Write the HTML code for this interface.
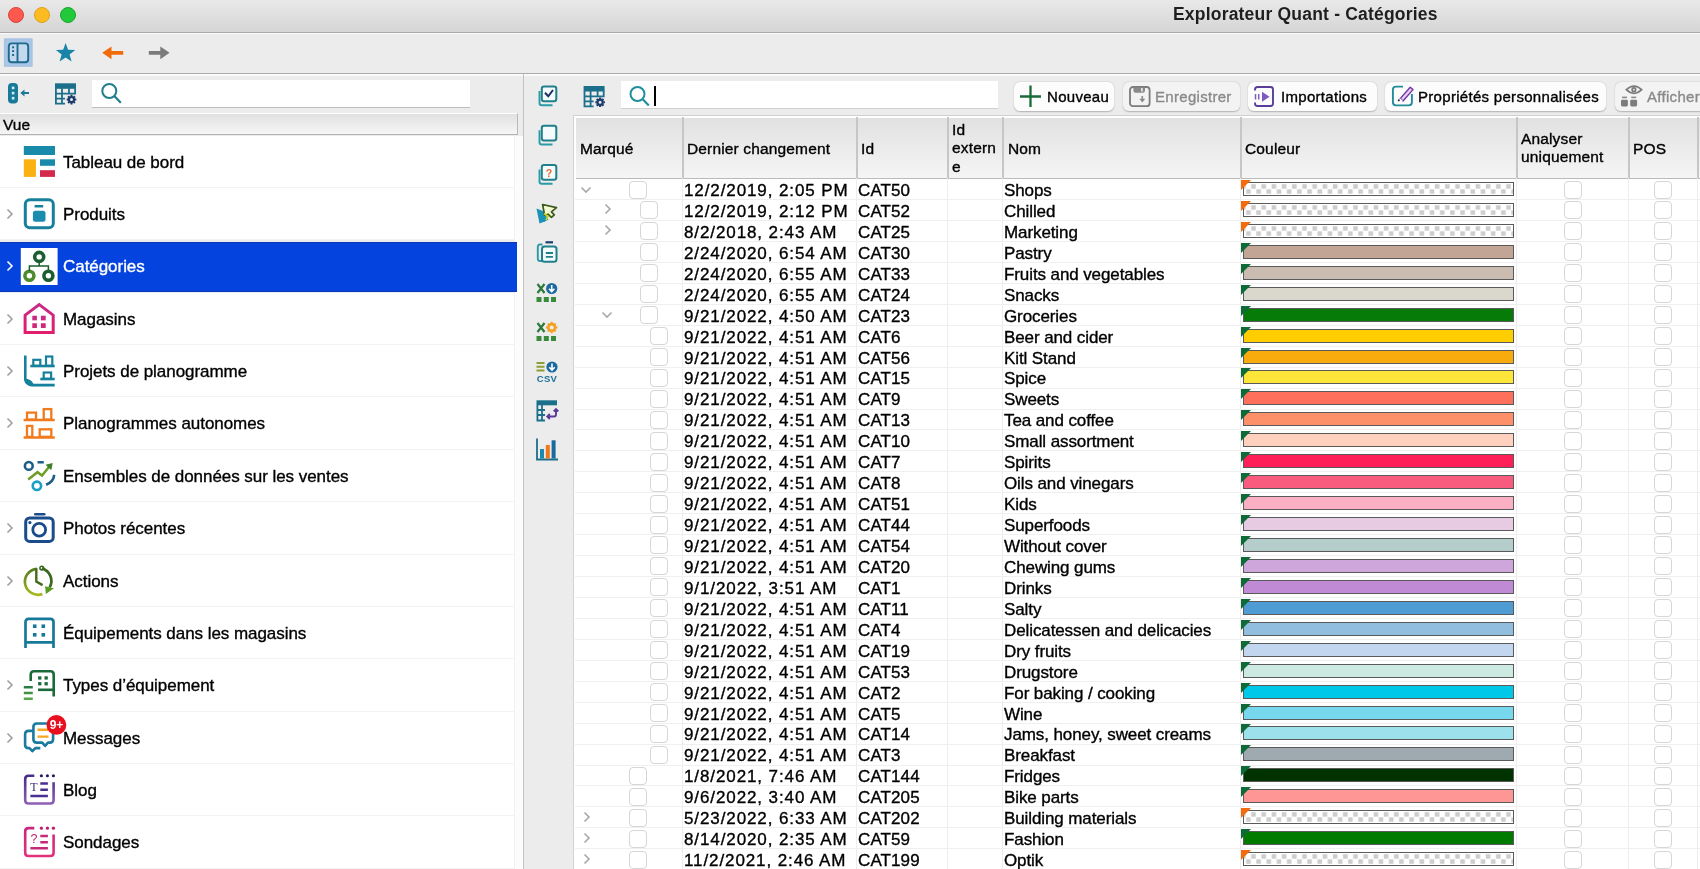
<!DOCTYPE html><html><head><meta charset="utf-8"><style>
*{margin:0;padding:0;box-sizing:border-box} svg{display:block}
html,body{width:1700px;height:869px;overflow:hidden;background:#ececec;font-family:"Liberation Sans", sans-serif;color:#000}
.a{position:absolute}
#title{left:0;top:0;width:1700px;height:33px;background:linear-gradient(#e9e9e9,#d5d5d5);border-bottom:1px solid #a9a9a9}
.tl{position:absolute;top:7px;width:16px;height:16px;border-radius:50%}
#ttl{left:1173px;top:4px;font-weight:bold;font-size:17.5px;color:#1e1e1e;white-space:nowrap;letter-spacing:0.2px}
#tb{left:0;top:33px;width:1700px;height:41px;background:#ececec;border-top:1.5px solid #fafafa;border-bottom:1px solid #adadad}
.lst{left:0;width:514px;height:52.4px;background:#fff;border-bottom:1px solid #f3f3f3}
.hd,.hdr,.c,.lt,.btn span{-webkit-text-stroke:0.35px currentColor}
.lt{position:absolute;left:63px;font-size:17px;white-space:nowrap;letter-spacing:-0.05px}
.hdr{position:absolute;font-size:15.5px;white-space:nowrap;line-height:18.5px;letter-spacing:0.15px}
.r{position:absolute;left:574px;width:1126px;height:21px;border-bottom:1px solid #ececec}
.c{position:absolute;font-size:17px;white-space:nowrap;line-height:21px}
.cb{position:absolute;width:18px;height:18px;border:1px solid #d6d6d6;border-radius:4px;background:#fff}
.bar{position:absolute;left:1243px;width:271px;height:14px;border:1px solid #5a5a5a}
.chk{background-color:#fff;background-image:linear-gradient(45deg,#cfcfcf 25%,transparent 25%,transparent 75%,#cfcfcf 75%),linear-gradient(45deg,#cfcfcf 25%,transparent 25%,transparent 75%,#cfcfcf 75%);background-size:10px 10px;background-position:0 0,5px 5px}
.btn{position:absolute;top:82px;height:29px;background:#fbfbfb;border-radius:6px;box-shadow:0 0.5px 1.5px rgba(0,0,0,0.25);font-size:15px;line-height:29px;white-space:nowrap;letter-spacing:0.3px}
</style></head><body><div id="root" style="position:absolute;left:0;top:0;width:1700px;height:869px;overflow:hidden;will-change:transform">
<div id="title" class="a">
<div class="tl" style="left:8px;background:#fe584f;border:1px solid #d8443c"></div>
<div class="tl" style="left:33.5px;background:#fdbb22;border:1px solid #dea11a"></div>
<div class="tl" style="left:60px;background:#22c93a;border:1px solid #1aa52c"></div>
</div>
<div id="ttl" class="a">Explorateur Quant - Catégories</div>
<div id="tb" class="a"></div>
<div class="a" style="left:0;top:74px;width:1700px;height:1.5px;background:#fafafa"></div>
<div class="a lst" style="top:135.50px;background:#fff;">
<div class="lt" style="top:17px;color:#000">Tableau de bord</div>
</div>
<div class="a lst" style="top:187.88px;background:#fff;">
<div class="a" style="left:6px;top:20px"><svg width="8" height="12" viewBox="0 0 8 12"><path d="M1.5 1.5 L6 6 L1.5 10.5" fill="none" stroke="#a0a0a0" stroke-width="1.6"/></svg></div>
<div class="lt" style="top:17px;color:#000">Produits</div>
</div>
<div class="a lst" style="top:241.86px;background:#0443dd;width:517px;z-index:2;height:50.5px;border-top:1px solid #0a36b8;border-bottom:1px solid #0a36b8">
<div class="a" style="left:6px;top:17.4px"><svg width="8" height="12" viewBox="0 0 8 12"><path d="M1.5 1.5 L6 6 L1.5 10.5" fill="none" stroke="#fff" stroke-width="1.6"/></svg></div>
<div class="lt" style="top:14.4px;color:#fff">Catégories</div>
</div>
<div class="a lst" style="top:292.64px;background:#fff;">
<div class="a" style="left:6px;top:20px"><svg width="8" height="12" viewBox="0 0 8 12"><path d="M1.5 1.5 L6 6 L1.5 10.5" fill="none" stroke="#a0a0a0" stroke-width="1.6"/></svg></div>
<div class="lt" style="top:17px;color:#000">Magasins</div>
</div>
<div class="a lst" style="top:345.02px;background:#fff;">
<div class="a" style="left:6px;top:20px"><svg width="8" height="12" viewBox="0 0 8 12"><path d="M1.5 1.5 L6 6 L1.5 10.5" fill="none" stroke="#a0a0a0" stroke-width="1.6"/></svg></div>
<div class="lt" style="top:17px;color:#000">Projets de planogramme</div>
</div>
<div class="a lst" style="top:397.40px;background:#fff;">
<div class="a" style="left:6px;top:20px"><svg width="8" height="12" viewBox="0 0 8 12"><path d="M1.5 1.5 L6 6 L1.5 10.5" fill="none" stroke="#a0a0a0" stroke-width="1.6"/></svg></div>
<div class="lt" style="top:17px;color:#000">Planogrammes autonomes</div>
</div>
<div class="a lst" style="top:449.78px;background:#fff;">
<div class="lt" style="top:17px;color:#000">Ensembles de données sur les ventes</div>
</div>
<div class="a lst" style="top:502.16px;background:#fff;">
<div class="a" style="left:6px;top:20px"><svg width="8" height="12" viewBox="0 0 8 12"><path d="M1.5 1.5 L6 6 L1.5 10.5" fill="none" stroke="#a0a0a0" stroke-width="1.6"/></svg></div>
<div class="lt" style="top:17px;color:#000">Photos récentes</div>
</div>
<div class="a lst" style="top:554.54px;background:#fff;">
<div class="a" style="left:6px;top:20px"><svg width="8" height="12" viewBox="0 0 8 12"><path d="M1.5 1.5 L6 6 L1.5 10.5" fill="none" stroke="#a0a0a0" stroke-width="1.6"/></svg></div>
<div class="lt" style="top:17px;color:#000">Actions</div>
</div>
<div class="a lst" style="top:606.92px;background:#fff;">
<div class="lt" style="top:17px;color:#000">Équipements dans les magasins</div>
</div>
<div class="a lst" style="top:659.30px;background:#fff;">
<div class="a" style="left:6px;top:20px"><svg width="8" height="12" viewBox="0 0 8 12"><path d="M1.5 1.5 L6 6 L1.5 10.5" fill="none" stroke="#a0a0a0" stroke-width="1.6"/></svg></div>
<div class="lt" style="top:17px;color:#000">Types d’équipement</div>
</div>
<div class="a lst" style="top:711.68px;background:#fff;">
<div class="a" style="left:6px;top:20px"><svg width="8" height="12" viewBox="0 0 8 12"><path d="M1.5 1.5 L6 6 L1.5 10.5" fill="none" stroke="#a0a0a0" stroke-width="1.6"/></svg></div>
<div class="lt" style="top:17px;color:#000">Messages</div>
</div>
<div class="a lst" style="top:764.06px;background:#fff;">
<div class="lt" style="top:17px;color:#000">Blog</div>
</div>
<div class="a lst" style="top:816.44px;background:#fff;">
<div class="lt" style="top:17px;color:#000">Sondages</div>
</div>
<div class="a" style="left:0;top:113.3px;width:518px;height:22px;background:linear-gradient(#e0e0e0,#f6f6f6);border-top:1px solid #fff;border-bottom:1.5px solid #b2b2b2;border-right:1px solid #b8b8b8"><div class="a hd" style="left:3px;top:1.5px;font-size:15.5px">Vue</div></div>
<div class="a" style="left:92px;top:80px;width:378px;height:28px;background:#fff;border-bottom:1px solid #bdbdbd"></div>
<div class="a" style="left:513.5px;top:135.5px;width:9.5px;height:734px;background:#fcfcfc;border-left:1px solid #f0f0f0"></div>
<div class="a" style="left:523px;top:74px;width:1px;height:795px;background:#c2c2c2"></div>
<div class="a" style="left:621px;top:81px;width:377px;height:28px;background:#fff;border-bottom:1px solid #d0d0d0"></div>
<div class="a" style="left:654px;top:86px;width:1.5px;height:20px;background:#000"></div>
<div class="btn" style="left:1014px;width:100px;background:#fcfcfc"><span class="a" style="left:33px;top:0;color:#000">Nouveau</span></div>
<div class="btn" style="left:1123px;width:117px;background:#f3f3f3"><span class="a" style="left:32px;top:0;color:#8a8a8a">Enregistrer</span></div>
<div class="btn" style="left:1248px;width:129px;background:#fcfcfc"><span class="a" style="left:33px;top:0;color:#000">Importations</span></div>
<div class="btn" style="left:1385px;width:221px;background:#fcfcfc"><span class="a" style="left:33px;top:0;color:#000">Propriétés personnalisées</span></div>
<div class="btn" style="left:1615px;width:100px;background:#f3f3f3"><span class="a" style="left:32px;top:0;color:#8a8a8a">Afficher</span></div>
<div class="a" style="left:572.5px;top:115.3px;width:1128px;height:754px;background:#fff;border-left:1px solid #d2d2d2;border-top:1px solid #d0d0d0"></div>
<div class="a" style="left:575.5px;top:118.3px;width:1126px;height:60.5px;background:linear-gradient(#e1e1e1,#f5f5f5);border-bottom:1.5px solid #bababa"></div>
<div class="a" style="left:682px;top:117px;width:1.5px;height:61px;background:#c6c6c6"></div>
<div class="a" style="left:682px;top:178px;width:1px;height:691px;background:#ededed"></div>
<div class="a" style="left:856px;top:117px;width:1.5px;height:61px;background:#c6c6c6"></div>
<div class="a" style="left:856px;top:178px;width:1px;height:691px;background:#ededed"></div>
<div class="a" style="left:947px;top:117px;width:1.5px;height:61px;background:#c6c6c6"></div>
<div class="a" style="left:947px;top:178px;width:1px;height:691px;background:#ededed"></div>
<div class="a" style="left:1002px;top:117px;width:1.5px;height:61px;background:#c6c6c6"></div>
<div class="a" style="left:1002px;top:178px;width:1px;height:691px;background:#ededed"></div>
<div class="a" style="left:1240px;top:117px;width:1.5px;height:61px;background:#c6c6c6"></div>
<div class="a" style="left:1240px;top:178px;width:1px;height:691px;background:#ededed"></div>
<div class="a" style="left:1516px;top:117px;width:1.5px;height:61px;background:#c6c6c6"></div>
<div class="a" style="left:1516px;top:178px;width:1px;height:691px;background:#ededed"></div>
<div class="a" style="left:1628px;top:117px;width:1.5px;height:61px;background:#c6c6c6"></div>
<div class="a" style="left:1628px;top:178px;width:1px;height:691px;background:#ededed"></div>
<div class="a" style="left:1697px;top:117px;width:1.5px;height:61px;background:#c6c6c6"></div>
<div class="a" style="left:1697px;top:178px;width:1px;height:691px;background:#ededed"></div>
<div class="hdr" style="left:580px;top:140px">Marqué</div>
<div class="hdr" style="left:687px;top:140px">Dernier changement</div>
<div class="hdr" style="left:861px;top:140px">Id</div>
<div class="hdr" style="left:952px;top:120.5px">Id<br>extern<br>e</div>
<div class="hdr" style="left:1008px;top:140px">Nom</div>
<div class="hdr" style="left:1245px;top:140px">Couleur</div>
<div class="hdr" style="left:1521px;top:129.5px">Analyser<br>uniquement</div>
<div class="hdr" style="left:1633px;top:140px">POS</div>
<div class="a" style="left:575px;top:199.14px;width:1126px;height:1px;background:#efefef"></div>
<div class="a" style="left:580px;top:185.50px"><svg width="12" height="8" viewBox="0 0 12 8"><path d="M1.5 1.5 L6 6 L10.5 1.5" fill="none" stroke="#a8a8a8" stroke-width="1.6"/></svg></div>
<div class="cb" style="left:629px;top:180.50px"></div>
<div class="c" style="left:684px;top:180.00px;letter-spacing:0.9px">12/2/2019, 2:05 PM</div>
<div class="c" style="left:858px;top:180.00px;letter-spacing:0.1px">CAT50</div>
<div class="c" style="left:1004px;top:180.00px;letter-spacing:-0.1px">Shops</div>
<div class="bar" style="top:182.00px;background:#fff;overflow:hidden"><svg width="269" height="12"><defs><pattern id="p0" patternUnits="userSpaceOnUse" width="10.2" height="20"><rect x="7.2" y="1.2" width="4.6" height="4.5" fill="#cdcdcd"/><rect x="2.1" y="6.3" width="4.6" height="4.5" fill="#cdcdcd"/><rect x="-3" y="1.2" width="4.6" height="4.5" fill="#cdcdcd"/></pattern></defs><rect width="269" height="12" fill="url(#p0)"/></svg></div>
<svg class="a" style="left:1241px;top:180.00px" width="10" height="10"><path d="M0 0H10L0 10Z" fill="#f36b0d"/></svg>
<div class="cb" style="left:1564px;top:180.50px"></div>
<div class="cb" style="left:1654px;top:180.50px"></div>
<div class="a" style="left:575px;top:220.08px;width:1126px;height:1px;background:#efefef"></div>
<div class="a" style="left:604px;top:203.44px"><svg width="8" height="12" viewBox="0 0 8 12"><path d="M1.5 1.5 L6 6 L1.5 10.5" fill="none" stroke="#a8a8a8" stroke-width="1.6"/></svg></div>
<div class="cb" style="left:640px;top:201.44px"></div>
<div class="c" style="left:684px;top:200.94px;letter-spacing:0.9px">12/2/2019, 2:12 PM</div>
<div class="c" style="left:858px;top:200.94px;letter-spacing:0.1px">CAT52</div>
<div class="c" style="left:1004px;top:200.94px;letter-spacing:-0.1px">Chilled</div>
<div class="bar" style="top:202.94px;background:#fff;overflow:hidden"><svg width="269" height="12"><defs><pattern id="p1" patternUnits="userSpaceOnUse" width="10.2" height="20"><rect x="7.2" y="1.2" width="4.6" height="4.5" fill="#cdcdcd"/><rect x="2.1" y="6.3" width="4.6" height="4.5" fill="#cdcdcd"/><rect x="-3" y="1.2" width="4.6" height="4.5" fill="#cdcdcd"/></pattern></defs><rect width="269" height="12" fill="url(#p1)"/></svg></div>
<svg class="a" style="left:1241px;top:200.94px" width="10" height="10"><path d="M0 0H10L0 10Z" fill="#f36b0d"/></svg>
<div class="cb" style="left:1564px;top:201.44px"></div>
<div class="cb" style="left:1654px;top:201.44px"></div>
<div class="a" style="left:575px;top:241.02px;width:1126px;height:1px;background:#efefef"></div>
<div class="a" style="left:604px;top:224.38px"><svg width="8" height="12" viewBox="0 0 8 12"><path d="M1.5 1.5 L6 6 L1.5 10.5" fill="none" stroke="#a8a8a8" stroke-width="1.6"/></svg></div>
<div class="cb" style="left:640px;top:222.38px"></div>
<div class="c" style="left:684px;top:221.88px;letter-spacing:0.9px">8/2/2018, 2:43 AM</div>
<div class="c" style="left:858px;top:221.88px;letter-spacing:0.1px">CAT25</div>
<div class="c" style="left:1004px;top:221.88px;letter-spacing:-0.1px">Marketing</div>
<div class="bar" style="top:223.88px;background:#fff;overflow:hidden"><svg width="269" height="12"><defs><pattern id="p2" patternUnits="userSpaceOnUse" width="10.2" height="20"><rect x="7.2" y="1.2" width="4.6" height="4.5" fill="#cdcdcd"/><rect x="2.1" y="6.3" width="4.6" height="4.5" fill="#cdcdcd"/><rect x="-3" y="1.2" width="4.6" height="4.5" fill="#cdcdcd"/></pattern></defs><rect width="269" height="12" fill="url(#p2)"/></svg></div>
<svg class="a" style="left:1241px;top:221.88px" width="10" height="10"><path d="M0 0H10L0 10Z" fill="#f36b0d"/></svg>
<div class="cb" style="left:1564px;top:222.38px"></div>
<div class="cb" style="left:1654px;top:222.38px"></div>
<div class="a" style="left:575px;top:261.96px;width:1126px;height:1px;background:#efefef"></div>
<div class="cb" style="left:640px;top:243.32px"></div>
<div class="c" style="left:684px;top:242.82px;letter-spacing:0.9px">2/24/2020, 6:54 AM</div>
<div class="c" style="left:858px;top:242.82px;letter-spacing:0.1px">CAT30</div>
<div class="c" style="left:1004px;top:242.82px;letter-spacing:-0.1px">Pastry</div>
<div class="bar" style="top:244.82px;background:#c3a596"></div>
<svg class="a" style="left:1241px;top:242.82px" width="10" height="10"><path d="M0 0H10L0 10Z" fill="#0e6a36"/></svg>
<div class="cb" style="left:1564px;top:243.32px"></div>
<div class="cb" style="left:1654px;top:243.32px"></div>
<div class="a" style="left:575px;top:282.90px;width:1126px;height:1px;background:#efefef"></div>
<div class="cb" style="left:640px;top:264.26px"></div>
<div class="c" style="left:684px;top:263.76px;letter-spacing:0.9px">2/24/2020, 6:55 AM</div>
<div class="c" style="left:858px;top:263.76px;letter-spacing:0.1px">CAT33</div>
<div class="c" style="left:1004px;top:263.76px;letter-spacing:-0.1px">Fruits and vegetables</div>
<div class="bar" style="top:265.76px;background:#cbbcb2"></div>
<svg class="a" style="left:1241px;top:263.76px" width="10" height="10"><path d="M0 0H10L0 10Z" fill="#0e6a36"/></svg>
<div class="cb" style="left:1564px;top:264.26px"></div>
<div class="cb" style="left:1654px;top:264.26px"></div>
<div class="a" style="left:575px;top:303.84px;width:1126px;height:1px;background:#efefef"></div>
<div class="cb" style="left:640px;top:285.20px"></div>
<div class="c" style="left:684px;top:284.70px;letter-spacing:0.9px">2/24/2020, 6:55 AM</div>
<div class="c" style="left:858px;top:284.70px;letter-spacing:0.1px">CAT24</div>
<div class="c" style="left:1004px;top:284.70px;letter-spacing:-0.1px">Snacks</div>
<div class="bar" style="top:286.70px;background:#dad7cd"></div>
<svg class="a" style="left:1241px;top:284.70px" width="10" height="10"><path d="M0 0H10L0 10Z" fill="#0e6a36"/></svg>
<div class="cb" style="left:1564px;top:285.20px"></div>
<div class="cb" style="left:1654px;top:285.20px"></div>
<div class="a" style="left:575px;top:324.78px;width:1126px;height:1px;background:#efefef"></div>
<div class="a" style="left:601px;top:311.14px"><svg width="12" height="8" viewBox="0 0 12 8"><path d="M1.5 1.5 L6 6 L10.5 1.5" fill="none" stroke="#a8a8a8" stroke-width="1.6"/></svg></div>
<div class="cb" style="left:640px;top:306.14px"></div>
<div class="c" style="left:684px;top:305.64px;letter-spacing:0.9px">9/21/2022, 4:50 AM</div>
<div class="c" style="left:858px;top:305.64px;letter-spacing:0.1px">CAT23</div>
<div class="c" style="left:1004px;top:305.64px;letter-spacing:-0.1px">Groceries</div>
<div class="bar" style="top:307.64px;background:#067b07"></div>
<svg class="a" style="left:1241px;top:305.64px" width="10" height="10"><path d="M0 0H10L0 10Z" fill="#0e6a36"/></svg>
<div class="cb" style="left:1564px;top:306.14px"></div>
<div class="cb" style="left:1654px;top:306.14px"></div>
<div class="a" style="left:575px;top:345.72px;width:1126px;height:1px;background:#efefef"></div>
<div class="cb" style="left:650px;top:327.08px"></div>
<div class="c" style="left:684px;top:326.58px;letter-spacing:0.9px">9/21/2022, 4:51 AM</div>
<div class="c" style="left:858px;top:326.58px;letter-spacing:0.1px">CAT6</div>
<div class="c" style="left:1004px;top:326.58px;letter-spacing:-0.1px">Beer and cider</div>
<div class="bar" style="top:328.58px;background:#fdcd00"></div>
<svg class="a" style="left:1241px;top:326.58px" width="10" height="10"><path d="M0 0H10L0 10Z" fill="#0e6a36"/></svg>
<div class="cb" style="left:1564px;top:327.08px"></div>
<div class="cb" style="left:1654px;top:327.08px"></div>
<div class="a" style="left:575px;top:366.66px;width:1126px;height:1px;background:#efefef"></div>
<div class="cb" style="left:650px;top:348.02px"></div>
<div class="c" style="left:684px;top:347.52px;letter-spacing:0.9px">9/21/2022, 4:51 AM</div>
<div class="c" style="left:858px;top:347.52px;letter-spacing:0.1px">CAT56</div>
<div class="c" style="left:1004px;top:347.52px;letter-spacing:-0.1px">Kitl Stand</div>
<div class="bar" style="top:349.52px;background:#f8ab0c"></div>
<svg class="a" style="left:1241px;top:347.52px" width="10" height="10"><path d="M0 0H10L0 10Z" fill="#0e6a36"/></svg>
<div class="cb" style="left:1564px;top:348.02px"></div>
<div class="cb" style="left:1654px;top:348.02px"></div>
<div class="a" style="left:575px;top:387.60px;width:1126px;height:1px;background:#efefef"></div>
<div class="cb" style="left:650px;top:368.96px"></div>
<div class="c" style="left:684px;top:368.46px;letter-spacing:0.9px">9/21/2022, 4:51 AM</div>
<div class="c" style="left:858px;top:368.46px;letter-spacing:0.1px">CAT15</div>
<div class="c" style="left:1004px;top:368.46px;letter-spacing:-0.1px">Spice</div>
<div class="bar" style="top:370.46px;background:#fde53a"></div>
<svg class="a" style="left:1241px;top:368.46px" width="10" height="10"><path d="M0 0H10L0 10Z" fill="#0e6a36"/></svg>
<div class="cb" style="left:1564px;top:368.96px"></div>
<div class="cb" style="left:1654px;top:368.96px"></div>
<div class="a" style="left:575px;top:408.54px;width:1126px;height:1px;background:#efefef"></div>
<div class="cb" style="left:650px;top:389.90px"></div>
<div class="c" style="left:684px;top:389.40px;letter-spacing:0.9px">9/21/2022, 4:51 AM</div>
<div class="c" style="left:858px;top:389.40px;letter-spacing:0.1px">CAT9</div>
<div class="c" style="left:1004px;top:389.40px;letter-spacing:-0.1px">Sweets</div>
<div class="bar" style="top:391.40px;background:#fe6f5c"></div>
<svg class="a" style="left:1241px;top:389.40px" width="10" height="10"><path d="M0 0H10L0 10Z" fill="#0e6a36"/></svg>
<div class="cb" style="left:1564px;top:389.90px"></div>
<div class="cb" style="left:1654px;top:389.90px"></div>
<div class="a" style="left:575px;top:429.48px;width:1126px;height:1px;background:#efefef"></div>
<div class="cb" style="left:650px;top:410.84px"></div>
<div class="c" style="left:684px;top:410.34px;letter-spacing:0.9px">9/21/2022, 4:51 AM</div>
<div class="c" style="left:858px;top:410.34px;letter-spacing:0.1px">CAT13</div>
<div class="c" style="left:1004px;top:410.34px;letter-spacing:-0.1px">Tea and coffee</div>
<div class="bar" style="top:412.34px;background:#fd9068"></div>
<svg class="a" style="left:1241px;top:410.34px" width="10" height="10"><path d="M0 0H10L0 10Z" fill="#0e6a36"/></svg>
<div class="cb" style="left:1564px;top:410.84px"></div>
<div class="cb" style="left:1654px;top:410.84px"></div>
<div class="a" style="left:575px;top:450.42px;width:1126px;height:1px;background:#efefef"></div>
<div class="cb" style="left:650px;top:431.78px"></div>
<div class="c" style="left:684px;top:431.28px;letter-spacing:0.9px">9/21/2022, 4:51 AM</div>
<div class="c" style="left:858px;top:431.28px;letter-spacing:0.1px">CAT10</div>
<div class="c" style="left:1004px;top:431.28px;letter-spacing:-0.1px">Small assortment</div>
<div class="bar" style="top:433.28px;background:#fed0bd"></div>
<svg class="a" style="left:1241px;top:431.28px" width="10" height="10"><path d="M0 0H10L0 10Z" fill="#0e6a36"/></svg>
<div class="cb" style="left:1564px;top:431.78px"></div>
<div class="cb" style="left:1654px;top:431.78px"></div>
<div class="a" style="left:575px;top:471.36px;width:1126px;height:1px;background:#efefef"></div>
<div class="cb" style="left:650px;top:452.72px"></div>
<div class="c" style="left:684px;top:452.22px;letter-spacing:0.9px">9/21/2022, 4:51 AM</div>
<div class="c" style="left:858px;top:452.22px;letter-spacing:0.1px">CAT7</div>
<div class="c" style="left:1004px;top:452.22px;letter-spacing:-0.1px">Spirits</div>
<div class="bar" style="top:454.22px;background:#fe1f58"></div>
<svg class="a" style="left:1241px;top:452.22px" width="10" height="10"><path d="M0 0H10L0 10Z" fill="#0e6a36"/></svg>
<div class="cb" style="left:1564px;top:452.72px"></div>
<div class="cb" style="left:1654px;top:452.72px"></div>
<div class="a" style="left:575px;top:492.30px;width:1126px;height:1px;background:#efefef"></div>
<div class="cb" style="left:650px;top:473.66px"></div>
<div class="c" style="left:684px;top:473.16px;letter-spacing:0.9px">9/21/2022, 4:51 AM</div>
<div class="c" style="left:858px;top:473.16px;letter-spacing:0.1px">CAT8</div>
<div class="c" style="left:1004px;top:473.16px;letter-spacing:-0.1px">Oils and vinegars</div>
<div class="bar" style="top:475.16px;background:#f85b7e"></div>
<svg class="a" style="left:1241px;top:473.16px" width="10" height="10"><path d="M0 0H10L0 10Z" fill="#0e6a36"/></svg>
<div class="cb" style="left:1564px;top:473.66px"></div>
<div class="cb" style="left:1654px;top:473.66px"></div>
<div class="a" style="left:575px;top:513.24px;width:1126px;height:1px;background:#efefef"></div>
<div class="cb" style="left:650px;top:494.60px"></div>
<div class="c" style="left:684px;top:494.10px;letter-spacing:0.9px">9/21/2022, 4:51 AM</div>
<div class="c" style="left:858px;top:494.10px;letter-spacing:0.1px">CAT51</div>
<div class="c" style="left:1004px;top:494.10px;letter-spacing:-0.1px">Kids</div>
<div class="bar" style="top:496.10px;background:#fbafc2"></div>
<svg class="a" style="left:1241px;top:494.10px" width="10" height="10"><path d="M0 0H10L0 10Z" fill="#0e6a36"/></svg>
<div class="cb" style="left:1564px;top:494.60px"></div>
<div class="cb" style="left:1654px;top:494.60px"></div>
<div class="a" style="left:575px;top:534.18px;width:1126px;height:1px;background:#efefef"></div>
<div class="cb" style="left:650px;top:515.54px"></div>
<div class="c" style="left:684px;top:515.04px;letter-spacing:0.9px">9/21/2022, 4:51 AM</div>
<div class="c" style="left:858px;top:515.04px;letter-spacing:0.1px">CAT44</div>
<div class="c" style="left:1004px;top:515.04px;letter-spacing:-0.1px">Superfoods</div>
<div class="bar" style="top:517.04px;background:#e6cbe3"></div>
<svg class="a" style="left:1241px;top:515.04px" width="10" height="10"><path d="M0 0H10L0 10Z" fill="#0e6a36"/></svg>
<div class="cb" style="left:1564px;top:515.54px"></div>
<div class="cb" style="left:1654px;top:515.54px"></div>
<div class="a" style="left:575px;top:555.12px;width:1126px;height:1px;background:#efefef"></div>
<div class="cb" style="left:650px;top:536.48px"></div>
<div class="c" style="left:684px;top:535.98px;letter-spacing:0.9px">9/21/2022, 4:51 AM</div>
<div class="c" style="left:858px;top:535.98px;letter-spacing:0.1px">CAT54</div>
<div class="c" style="left:1004px;top:535.98px;letter-spacing:-0.1px">Without cover</div>
<div class="bar" style="top:537.98px;background:#b6cecb"></div>
<svg class="a" style="left:1241px;top:535.98px" width="10" height="10"><path d="M0 0H10L0 10Z" fill="#0e6a36"/></svg>
<div class="cb" style="left:1564px;top:536.48px"></div>
<div class="cb" style="left:1654px;top:536.48px"></div>
<div class="a" style="left:575px;top:576.06px;width:1126px;height:1px;background:#efefef"></div>
<div class="cb" style="left:650px;top:557.42px"></div>
<div class="c" style="left:684px;top:556.92px;letter-spacing:0.9px">9/21/2022, 4:51 AM</div>
<div class="c" style="left:858px;top:556.92px;letter-spacing:0.1px">CAT20</div>
<div class="c" style="left:1004px;top:556.92px;letter-spacing:-0.1px">Chewing gums</div>
<div class="bar" style="top:558.92px;background:#cea6dc"></div>
<svg class="a" style="left:1241px;top:556.92px" width="10" height="10"><path d="M0 0H10L0 10Z" fill="#0e6a36"/></svg>
<div class="cb" style="left:1564px;top:557.42px"></div>
<div class="cb" style="left:1654px;top:557.42px"></div>
<div class="a" style="left:575px;top:597.00px;width:1126px;height:1px;background:#efefef"></div>
<div class="cb" style="left:650px;top:578.36px"></div>
<div class="c" style="left:684px;top:577.86px;letter-spacing:0.9px">9/1/2022, 3:51 AM</div>
<div class="c" style="left:858px;top:577.86px;letter-spacing:0.1px">CAT1</div>
<div class="c" style="left:1004px;top:577.86px;letter-spacing:-0.1px">Drinks</div>
<div class="bar" style="top:579.86px;background:#c08ad5"></div>
<svg class="a" style="left:1241px;top:577.86px" width="10" height="10"><path d="M0 0H10L0 10Z" fill="#0e6a36"/></svg>
<div class="cb" style="left:1564px;top:578.36px"></div>
<div class="cb" style="left:1654px;top:578.36px"></div>
<div class="a" style="left:575px;top:617.94px;width:1126px;height:1px;background:#efefef"></div>
<div class="cb" style="left:650px;top:599.30px"></div>
<div class="c" style="left:684px;top:598.80px;letter-spacing:0.9px">9/21/2022, 4:51 AM</div>
<div class="c" style="left:858px;top:598.80px;letter-spacing:0.1px">CAT11</div>
<div class="c" style="left:1004px;top:598.80px;letter-spacing:-0.1px">Salty</div>
<div class="bar" style="top:600.80px;background:#4f9cd4"></div>
<svg class="a" style="left:1241px;top:598.80px" width="10" height="10"><path d="M0 0H10L0 10Z" fill="#0e6a36"/></svg>
<div class="cb" style="left:1564px;top:599.30px"></div>
<div class="cb" style="left:1654px;top:599.30px"></div>
<div class="a" style="left:575px;top:638.88px;width:1126px;height:1px;background:#efefef"></div>
<div class="cb" style="left:650px;top:620.24px"></div>
<div class="c" style="left:684px;top:619.74px;letter-spacing:0.9px">9/21/2022, 4:51 AM</div>
<div class="c" style="left:858px;top:619.74px;letter-spacing:0.1px">CAT4</div>
<div class="c" style="left:1004px;top:619.74px;letter-spacing:-0.1px">Delicatessen and delicacies</div>
<div class="bar" style="top:621.74px;background:#91bedf"></div>
<svg class="a" style="left:1241px;top:619.74px" width="10" height="10"><path d="M0 0H10L0 10Z" fill="#0e6a36"/></svg>
<div class="cb" style="left:1564px;top:620.24px"></div>
<div class="cb" style="left:1654px;top:620.24px"></div>
<div class="a" style="left:575px;top:659.82px;width:1126px;height:1px;background:#efefef"></div>
<div class="cb" style="left:650px;top:641.18px"></div>
<div class="c" style="left:684px;top:640.68px;letter-spacing:0.9px">9/21/2022, 4:51 AM</div>
<div class="c" style="left:858px;top:640.68px;letter-spacing:0.1px">CAT19</div>
<div class="c" style="left:1004px;top:640.68px;letter-spacing:-0.1px">Dry fruits</div>
<div class="bar" style="top:642.68px;background:#c3d6ef"></div>
<svg class="a" style="left:1241px;top:640.68px" width="10" height="10"><path d="M0 0H10L0 10Z" fill="#0e6a36"/></svg>
<div class="cb" style="left:1564px;top:641.18px"></div>
<div class="cb" style="left:1654px;top:641.18px"></div>
<div class="a" style="left:575px;top:680.76px;width:1126px;height:1px;background:#efefef"></div>
<div class="cb" style="left:650px;top:662.12px"></div>
<div class="c" style="left:684px;top:661.62px;letter-spacing:0.9px">9/21/2022, 4:51 AM</div>
<div class="c" style="left:858px;top:661.62px;letter-spacing:0.1px">CAT53</div>
<div class="c" style="left:1004px;top:661.62px;letter-spacing:-0.1px">Drugstore</div>
<div class="bar" style="top:663.62px;background:#cceae1"></div>
<svg class="a" style="left:1241px;top:661.62px" width="10" height="10"><path d="M0 0H10L0 10Z" fill="#0e6a36"/></svg>
<div class="cb" style="left:1564px;top:662.12px"></div>
<div class="cb" style="left:1654px;top:662.12px"></div>
<div class="a" style="left:575px;top:701.70px;width:1126px;height:1px;background:#efefef"></div>
<div class="cb" style="left:650px;top:683.06px"></div>
<div class="c" style="left:684px;top:682.56px;letter-spacing:0.9px">9/21/2022, 4:51 AM</div>
<div class="c" style="left:858px;top:682.56px;letter-spacing:0.1px">CAT2</div>
<div class="c" style="left:1004px;top:682.56px;letter-spacing:-0.1px">For baking / cooking</div>
<div class="bar" style="top:684.56px;background:#00c8e8"></div>
<svg class="a" style="left:1241px;top:682.56px" width="10" height="10"><path d="M0 0H10L0 10Z" fill="#0e6a36"/></svg>
<div class="cb" style="left:1564px;top:683.06px"></div>
<div class="cb" style="left:1654px;top:683.06px"></div>
<div class="a" style="left:575px;top:722.64px;width:1126px;height:1px;background:#efefef"></div>
<div class="cb" style="left:650px;top:704.00px"></div>
<div class="c" style="left:684px;top:703.50px;letter-spacing:0.9px">9/21/2022, 4:51 AM</div>
<div class="c" style="left:858px;top:703.50px;letter-spacing:0.1px">CAT5</div>
<div class="c" style="left:1004px;top:703.50px;letter-spacing:-0.1px">Wine</div>
<div class="bar" style="top:705.50px;background:#77d7ec"></div>
<svg class="a" style="left:1241px;top:703.50px" width="10" height="10"><path d="M0 0H10L0 10Z" fill="#0e6a36"/></svg>
<div class="cb" style="left:1564px;top:704.00px"></div>
<div class="cb" style="left:1654px;top:704.00px"></div>
<div class="a" style="left:575px;top:743.58px;width:1126px;height:1px;background:#efefef"></div>
<div class="cb" style="left:650px;top:724.94px"></div>
<div class="c" style="left:684px;top:724.44px;letter-spacing:0.9px">9/21/2022, 4:51 AM</div>
<div class="c" style="left:858px;top:724.44px;letter-spacing:0.1px">CAT14</div>
<div class="c" style="left:1004px;top:724.44px;letter-spacing:-0.1px">Jams, honey, sweet creams</div>
<div class="bar" style="top:726.44px;background:#9de1ec"></div>
<svg class="a" style="left:1241px;top:724.44px" width="10" height="10"><path d="M0 0H10L0 10Z" fill="#0e6a36"/></svg>
<div class="cb" style="left:1564px;top:724.94px"></div>
<div class="cb" style="left:1654px;top:724.94px"></div>
<div class="a" style="left:575px;top:764.52px;width:1126px;height:1px;background:#efefef"></div>
<div class="cb" style="left:650px;top:745.88px"></div>
<div class="c" style="left:684px;top:745.38px;letter-spacing:0.9px">9/21/2022, 4:51 AM</div>
<div class="c" style="left:858px;top:745.38px;letter-spacing:0.1px">CAT3</div>
<div class="c" style="left:1004px;top:745.38px;letter-spacing:-0.1px">Breakfast</div>
<div class="bar" style="top:747.38px;background:#9faab0"></div>
<svg class="a" style="left:1241px;top:745.38px" width="10" height="10"><path d="M0 0H10L0 10Z" fill="#0e6a36"/></svg>
<div class="cb" style="left:1564px;top:745.88px"></div>
<div class="cb" style="left:1654px;top:745.88px"></div>
<div class="a" style="left:575px;top:785.46px;width:1126px;height:1px;background:#efefef"></div>
<div class="cb" style="left:629px;top:766.82px"></div>
<div class="c" style="left:684px;top:766.32px;letter-spacing:0.9px">1/8/2021, 7:46 AM</div>
<div class="c" style="left:858px;top:766.32px;letter-spacing:0.1px">CAT144</div>
<div class="c" style="left:1004px;top:766.32px;letter-spacing:-0.1px">Fridges</div>
<div class="bar" style="top:768.32px;background:#003300"></div>
<svg class="a" style="left:1241px;top:766.32px" width="10" height="10"><path d="M0 0H10L0 10Z" fill="#0e6a36"/></svg>
<div class="cb" style="left:1564px;top:766.82px"></div>
<div class="cb" style="left:1654px;top:766.82px"></div>
<div class="a" style="left:575px;top:806.40px;width:1126px;height:1px;background:#efefef"></div>
<div class="cb" style="left:629px;top:787.76px"></div>
<div class="c" style="left:684px;top:787.26px;letter-spacing:0.9px">9/6/2022, 3:40 AM</div>
<div class="c" style="left:858px;top:787.26px;letter-spacing:0.1px">CAT205</div>
<div class="c" style="left:1004px;top:787.26px;letter-spacing:-0.1px">Bike parts</div>
<div class="bar" style="top:789.26px;background:#fe9696"></div>
<svg class="a" style="left:1241px;top:787.26px" width="10" height="10"><path d="M0 0H10L0 10Z" fill="#0e6a36"/></svg>
<div class="cb" style="left:1564px;top:787.76px"></div>
<div class="cb" style="left:1654px;top:787.76px"></div>
<div class="a" style="left:575px;top:827.34px;width:1126px;height:1px;background:#efefef"></div>
<div class="a" style="left:583px;top:810.70px"><svg width="8" height="12" viewBox="0 0 8 12"><path d="M1.5 1.5 L6 6 L1.5 10.5" fill="none" stroke="#a8a8a8" stroke-width="1.6"/></svg></div>
<div class="cb" style="left:629px;top:808.70px"></div>
<div class="c" style="left:684px;top:808.20px;letter-spacing:0.9px">5/23/2022, 6:33 AM</div>
<div class="c" style="left:858px;top:808.20px;letter-spacing:0.1px">CAT202</div>
<div class="c" style="left:1004px;top:808.20px;letter-spacing:-0.1px">Building materials</div>
<div class="bar" style="top:810.20px;background:#fff;overflow:hidden"><svg width="269" height="12"><defs><pattern id="p30" patternUnits="userSpaceOnUse" width="10.2" height="20"><rect x="7.2" y="1.2" width="4.6" height="4.5" fill="#cdcdcd"/><rect x="2.1" y="6.3" width="4.6" height="4.5" fill="#cdcdcd"/><rect x="-3" y="1.2" width="4.6" height="4.5" fill="#cdcdcd"/></pattern></defs><rect width="269" height="12" fill="url(#p30)"/></svg></div>
<svg class="a" style="left:1241px;top:808.20px" width="10" height="10"><path d="M0 0H10L0 10Z" fill="#f36b0d"/></svg>
<div class="cb" style="left:1564px;top:808.70px"></div>
<div class="cb" style="left:1654px;top:808.70px"></div>
<div class="a" style="left:575px;top:848.28px;width:1126px;height:1px;background:#efefef"></div>
<div class="a" style="left:583px;top:831.64px"><svg width="8" height="12" viewBox="0 0 8 12"><path d="M1.5 1.5 L6 6 L1.5 10.5" fill="none" stroke="#a8a8a8" stroke-width="1.6"/></svg></div>
<div class="cb" style="left:629px;top:829.64px"></div>
<div class="c" style="left:684px;top:829.14px;letter-spacing:0.9px">8/14/2020, 2:35 AM</div>
<div class="c" style="left:858px;top:829.14px;letter-spacing:0.1px">CAT59</div>
<div class="c" style="left:1004px;top:829.14px;letter-spacing:-0.1px">Fashion</div>
<div class="bar" style="top:831.14px;background:#007b00"></div>
<svg class="a" style="left:1241px;top:829.14px" width="10" height="10"><path d="M0 0H10L0 10Z" fill="#0e6a36"/></svg>
<div class="cb" style="left:1564px;top:829.64px"></div>
<div class="cb" style="left:1654px;top:829.64px"></div>
<div class="a" style="left:575px;top:869.22px;width:1126px;height:1px;background:#efefef"></div>
<div class="a" style="left:583px;top:852.58px"><svg width="8" height="12" viewBox="0 0 8 12"><path d="M1.5 1.5 L6 6 L1.5 10.5" fill="none" stroke="#a8a8a8" stroke-width="1.6"/></svg></div>
<div class="cb" style="left:629px;top:850.58px"></div>
<div class="c" style="left:684px;top:850.08px;letter-spacing:0.9px">11/2/2021, 2:46 AM</div>
<div class="c" style="left:858px;top:850.08px;letter-spacing:0.1px">CAT199</div>
<div class="c" style="left:1004px;top:850.08px;letter-spacing:-0.1px">Optik</div>
<div class="bar" style="top:852.08px;background:#fff;overflow:hidden"><svg width="269" height="12"><defs><pattern id="p32" patternUnits="userSpaceOnUse" width="10.2" height="20"><rect x="7.2" y="1.2" width="4.6" height="4.5" fill="#cdcdcd"/><rect x="2.1" y="6.3" width="4.6" height="4.5" fill="#cdcdcd"/><rect x="-3" y="1.2" width="4.6" height="4.5" fill="#cdcdcd"/></pattern></defs><rect width="269" height="12" fill="url(#p32)"/></svg></div>
<svg class="a" style="left:1241px;top:850.08px" width="10" height="10"><path d="M0 0H10L0 10Z" fill="#f36b0d"/></svg>
<div class="cb" style="left:1564px;top:850.58px"></div>
<div class="cb" style="left:1654px;top:850.58px"></div>
<svg class="a" style="left:0;top:0;z-index:5" width="1700" height="869" viewBox="0 0 1700 869"><g transform="translate(23.5,145.7)">
<rect x="0.3" y="0.3" width="31.2" height="9" fill="#1a8aab"/>
<rect x="0.3" y="13.6" width="12.1" height="17.6" fill="#fbb014"/>
<rect x="16.5" y="13.6" width="15" height="6.5" fill="#1a8aab"/>
<rect x="16.5" y="24.5" width="15" height="6.7" fill="#d52a4c"/></g>
<g transform="translate(23.5,198.07999999999998)">
<rect x="1.8" y="1.6" width="28" height="28" rx="4.5" fill="none" stroke="#17809c" stroke-width="3"/>
<rect x="11.1" y="6.9" width="8.6" height="2.5" fill="#17809c"/>
<rect x="9.4" y="12.6" width="12.6" height="11" rx="2.5" fill="#1a8cae"/></g>
<rect x="20.8" y="248" width="36.8" height="37" fill="#fff"/>
<g transform="translate(23.5,250.5)">
<circle cx="15.7" cy="6.4" r="4.5" fill="none" stroke="#1c5e30" stroke-width="3.6"/>
<circle cx="5.9" cy="25.3" r="4.5" fill="none" stroke="#4f8a2e" stroke-width="3.6"/>
<circle cx="24.9" cy="25.3" r="4.5" fill="none" stroke="#1c5e30" stroke-width="3.6"/>
<path d="M15.7 11V15.6M5.9 20.5V15.6H24.9V20.5" fill="none" stroke="#1c5e30" stroke-width="1.5"/></g>
<defs><linearGradient id="gm" x1="0" y1="0" x2="0" y2="1"><stop offset="0" stop-color="#c72a86"/><stop offset="1" stop-color="#e01e6c"/></linearGradient><linearGradient id="gact" x1="0" y1="0" x2="0.3" y2="1"><stop offset="0" stop-color="#4a7420"/><stop offset="0.5" stop-color="#7e9e1e"/><stop offset="1" stop-color="#a2b81c"/></linearGradient><linearGradient id="gblog" x1="0" y1="0" x2="0" y2="1"><stop offset="0" stop-color="#472c88"/><stop offset="1" stop-color="#8e5fb4"/></linearGradient><linearGradient id="gson" x1="0" y1="0" x2="0" y2="1"><stop offset="0" stop-color="#c8287e"/><stop offset="1" stop-color="#e3307a"/></linearGradient><linearGradient id="gtype" x1="0" y1="0" x2="0" y2="1"><stop offset="0" stop-color="#2a7a45"/><stop offset="1" stop-color="#5aa64a"/></linearGradient></defs>
<g transform="translate(23.5,302.84)">
<path d="M1.6 29.6V12.3L15.7 1.8L29.7 12.3V29.6Z" fill="none" stroke="url(#gm)" stroke-width="3" stroke-linejoin="miter"/>
<rect x="8.8" y="12.9" width="4.6" height="4.6" fill="#c92a84"/><rect x="17.4" y="12.9" width="4.8" height="4.6" fill="#c92a84"/>
<rect x="8.8" y="20.4" width="4.6" height="4.8" fill="#d3267a"/><rect x="17.4" y="20.4" width="4.8" height="4.8" fill="#d3267a"/></g>
<g transform="translate(23.5,355.21999999999997)">
<path d="M1.8 0.3V24.5" stroke="#17809c" stroke-width="2.6" fill="none"/>
<path d="M9.5 29.9H31.2" stroke="#17809c" stroke-width="2.8" fill="none"/>
<path d="M0.5 23.5C0.5 28 4 31.3 9.8 31.3V28.5C8.5 25.5 6 23.5 0.5 23.5Z" fill="#17809c"/>
<path d="M6.8 10.8H31.2" stroke="#17809c" stroke-width="2.6"/>
<rect x="9.8" y="4.6" width="7" height="6" fill="none" stroke="#17809c" stroke-width="2.2"/>
<rect x="22.5" y="1.3" width="6.3" height="9.3" fill="none" stroke="#17809c" stroke-width="2.2"/>
<path d="M16.8 23.8H31.2" stroke="#17809c" stroke-width="2.6"/>
<rect x="20.2" y="17.3" width="7.4" height="6.3" fill="none" stroke="#17809c" stroke-width="2.2"/></g>
<g transform="translate(23.5,407.6)">
<path d="M0.1 12.5H31.2M0.1 29.8H31.2" stroke="#f07b1d" stroke-width="2.5"/>
<rect x="3.5" y="5" width="9" height="7" fill="none" stroke="#f07b1d" stroke-width="2.3"/>
<rect x="20.2" y="1.5" width="7.6" height="10.5" fill="none" stroke="#f07b1d" stroke-width="2.3"/>
<rect x="3.5" y="18.3" width="5.3" height="11" fill="none" stroke="#f07b1d" stroke-width="2.3"/>
<rect x="16.2" y="21.7" width="11.6" height="7.5" fill="none" stroke="#f07b1d" stroke-width="2.3"/></g>
<g transform="translate(23.5,459.98)">
<circle cx="5.3" cy="5.9" r="3.9" fill="none" stroke="#1b5f88" stroke-width="2.6"/>
<path d="M14 2.3H20.3" stroke="#1b5f88" stroke-width="2.5"/>
<path d="M4.7 19.6L14 12.2L18.5 15.6L25.5 7" fill="none" stroke="#6e9e26" stroke-width="2.5"/>
<path d="M22 4.8L29.2 3L27.8 10.2Z" fill="#3f7f2a"/>
<circle cx="13.4" cy="25.8" r="4.2" fill="none" stroke="#1a9fc8" stroke-width="2.6"/>
<path d="M30.7 14.8C30.3 19 27 23 22.6 24.7" fill="none" stroke="#1b5f88" stroke-width="2.6"/></g>
<g transform="translate(23.5,512.36)">
<rect x="2.2" y="5.6" width="27.5" height="23.5" rx="4" fill="none" stroke="#1a4c8c" stroke-width="3"/>
<rect x="10.5" y="0.6" width="11.5" height="2.6" rx="1.2" fill="#1a4c8c"/>
<circle cx="15.7" cy="17.4" r="6.4" fill="none" stroke="#1a4c8c" stroke-width="2.8"/>
<circle cx="6.4" cy="10.2" r="1.6" fill="#1a4c8c"/></g>
<g transform="translate(23.5,565.74)">
<path d="M13.37 3.05A13 13 0 1 0 18.95 28.2" fill="none" stroke="url(#gact)" stroke-width="2.7"/>
<path d="M18.3 2.6A13 13 0 0 1 26.2 21.5" fill="none" stroke="#3a6820" stroke-width="2.7"/>
<circle cx="18.3" cy="2.3" r="1.9" fill="none" stroke="#3a6820" stroke-width="1.5"/>
<path d="M21.6 20.6L30.4 22.5L22.4 28.3Z" fill="#5a9a20"/>
<path d="M12.8 2.5V15.8L19.1 19.4" fill="none" stroke="#466a1c" stroke-width="2.4"/></g>
<g transform="translate(23.5,617.1200000000001)">
<path d="M2 31V5Q2 1.8 5.2 1.8H26.8Q30 1.8 30 5V31M2 25.3H30" fill="none" stroke="#17799a" stroke-width="2.7"/>
<rect x="9.4" y="7.3" width="3.6" height="3.6" fill="#17799a"/><rect x="18" y="7.3" width="3.6" height="3.6" fill="#17799a"/>
<rect x="9.4" y="15.9" width="3.6" height="3.6" fill="#17799a"/><rect x="18" y="15.9" width="3.6" height="3.6" fill="#17799a"/></g>
<g transform="translate(23.5,669.5000000000001)">
<path d="M7.2 11.5V5Q7.2 1.8 10.4 1.8H27Q30.2 1.8 30.2 5V27" fill="none" stroke="#1b6a3a" stroke-width="2.6"/>
<path d="M14.5 20.3H30.2" stroke="#1b6a3a" stroke-width="2.6"/>
<rect x="14.6" y="6.8" width="3.3" height="3.3" fill="#1b6a3a"/><rect x="21" y="6.8" width="3.3" height="3.3" fill="#1b6a3a"/>
<rect x="14.6" y="12.6" width="3.3" height="3.3" fill="#1b6a3a"/><rect x="21" y="12.6" width="3.3" height="3.3" fill="#1b6a3a"/>
<path d="M0.3 17.8H9.3M0.3 23.5H9.3M0.3 29.2H9.3" stroke="url(#gtype)" stroke-width="2.5"/></g>
<g transform="translate(23.5,721.8800000000001)">
<path d="M9.9 9H5Q1.6 9 1.6 12.4V22.8Q1.6 26.2 5 26.2H6L8.9 29.3L11.8 26.2H16.8" fill="none" stroke="#1a7aa0" stroke-width="2.6" stroke-linejoin="round"/>
<path d="M13.3 1.6H26.2Q29.6 1.6 29.6 5V17.3Q29.6 20.7 26.2 20.7H24.5L21.6 24L18.7 20.7H13.3Q9.9 20.7 9.9 17.3V5Q9.9 1.6 13.3 1.6Z" fill="#fff" stroke="#1a7aa0" stroke-width="2.6" stroke-linejoin="round"/>
<path d="M14 7.8H25M14 14.7H25" stroke="#f5a623" stroke-width="2.4"/>
<circle cx="32.9" cy="3" r="9.9" fill="#e8101e"/>
<text x="33" y="7.3" font-family="Liberation Sans" font-weight="bold" font-size="12" fill="#fff" text-anchor="middle">9+</text></g>
<g transform="translate(23.5,774.2600000000001)">
<path d="M10.8 1.5H5Q1.7 1.5 1.7 4.8V26Q1.7 29.3 5 29.3H26.8Q30.1 29.3 30.1 26V7.9" fill="none" stroke="url(#gblog)" stroke-width="2.6"/>
<circle cx="17.9" cy="1.5" r="1.6" fill="#2a1a60"/><circle cx="23.9" cy="1.5" r="1.6" fill="#2a1a60"/><circle cx="29.9" cy="1.5" r="1.6" fill="#2a1a60"/>
<text x="10.5" y="16.4" font-family="Liberation Serif" font-size="12" fill="#3a2a70" text-anchor="middle">T</text>
<path d="M16.8 9.3H24.4M16.8 15.5H24.4M6.9 21.7H24.4" stroke="#4a3090" stroke-width="2.5"/></g>
<g transform="translate(23.5,826.6400000000001)">
<path d="M10.8 1.5H5Q1.7 1.5 1.7 4.8V26Q1.7 29.3 5 29.3H26.8Q30.1 29.3 30.1 26V7.9" fill="none" stroke="url(#gson)" stroke-width="2.6"/>
<circle cx="17.9" cy="1.5" r="1.6" fill="#b8206e"/><circle cx="23.9" cy="1.5" r="1.6" fill="#b8206e"/><circle cx="29.9" cy="1.5" r="1.6" fill="#b8206e"/>
<text x="10.5" y="16.6" font-family="Liberation Sans" font-size="12.5" fill="#c0226e" text-anchor="middle">?</text>
<path d="M16.8 9.3H24.4M16.8 15.5H24.4M6.9 21.7H24.4" stroke="#c8287a" stroke-width="2.5"/></g><rect x="4.2" y="38.8" width="28" height="27.5" fill="#a9c6e6" stroke="#98b8dc" stroke-width="0.6"/>
<rect x="8.8" y="43.4" width="19.4" height="18.8" rx="3" fill="#c3d9ee" stroke="#1d6a8c" stroke-width="1.9"/>
<path d="M17.5 43.4V62.2" stroke="#1d6a8c" stroke-width="1.9"/>
<rect x="12.1" y="46.3" width="2" height="2" fill="#1d6a8c"/><rect x="12.1" y="50.1" width="2" height="2" fill="#1d6a8c"/><rect x="12.1" y="54" width="2" height="2" fill="#1d6a8c"/>
<polygon points="65.60,43.00 68.07,49.80 75.30,50.05 69.59,54.50 71.60,61.45 65.60,57.40 59.60,61.45 61.61,54.50 55.90,50.05 63.13,49.80" fill="#1a84a8"/>
<path d="M102.2 52.8L111.5 46.5V50.9H123.2V54.7H111.5V59.2Z" fill="#f26b0b"/>
<path d="M169.6 52.8L160.3 46.5V50.9H148.8V54.7H160.3V59.2Z" fill="#7b7b7b"/>
<rect x="8" y="83" width="10" height="20.5" rx="4" fill="#187a97"/>
<rect x="11.8" y="86.6" width="2.6" height="2.6" fill="#c8f0ff"/><rect x="11.8" y="91.8" width="2.6" height="2.6" fill="#c8f0ff"/><rect x="11.8" y="96.9" width="2.6" height="2.6" fill="#c8f0ff"/>
<path d="M20.3 93L24.5 89.6V91.9H29V94.1H24.5V96.4Z" fill="#187a97"/>
<g transform="translate(55,83.3)">
<rect x="0" y="0" width="21" height="5.5" fill="#1c6f8a"/>
<path d="M0.9 5V20.3H10M0.9 10.3H21M0.9 15.3H10M7 5V20.3M14 5V10.3M20.1 5V10.3" fill="none" stroke="#1c6f8a" stroke-width="1.8"/>
<circle cx="16.5" cy="16.3" r="2.6" fill="none" stroke="#1b3a6c" stroke-width="2.2"/>
<path d="M16.5 11.5V13M16.5 19.5V21.1M11.7 16.3H13.2M19.8 16.3H21.3M13.1 12.9L14.1 13.9M18.9 18.7L19.9 19.7M13.1 19.7L14.1 18.7M18.9 13.9L19.9 12.9" stroke="#1b3a6c" stroke-width="2"/></g>
<circle cx="109.3" cy="91" r="7" fill="none" stroke="#1f7f8c" stroke-width="2"/><path d="M114.3 96L120.8 102.8" stroke="#1f7f8c" stroke-width="2.2"/>
<g transform="translate(583.6,86)">
<rect x="0" y="0" width="21" height="5.5" fill="#1c6f8a"/>
<path d="M0.9 5V20.3H10M0.9 10.3H21M0.9 15.3H10M7 5V20.3M14 5V10.3M20.1 5V10.3" fill="none" stroke="#1c6f8a" stroke-width="1.8"/>
<circle cx="16.5" cy="16.3" r="2.6" fill="none" stroke="#1b3a6c" stroke-width="2.2"/>
<path d="M16.5 11.5V13M16.5 19.5V21.1M11.7 16.3H13.2M19.8 16.3H21.3M13.1 12.9L14.1 13.9M18.9 18.7L19.9 19.7M13.1 19.7L14.1 18.7M18.9 13.9L19.9 12.9" stroke="#1b3a6c" stroke-width="2"/></g>
<circle cx="637.5" cy="94" r="7" fill="none" stroke="#1f8f9c" stroke-width="2"/><path d="M642.5 99L648.8 105.6" stroke="#1f8f9c" stroke-width="2.2"/><g transform="translate(536,85.5)">
<path d="M3.5 5.5V17.5Q3.5 19.8 5.8 19.8H16.5" fill="none" stroke="#2a9aa6" stroke-width="1.9"/>
<rect x="5.8" y="1" width="14.5" height="14.8" rx="2.3" fill="#f4fbfc" stroke="#1f7f8a" stroke-width="2"/>
<path d="M9 7.2L12.3 10.8L17 4.5" fill="none" stroke="#1c2f60" stroke-width="2"/></g>
<g transform="translate(536,124.69999999999999)">
<path d="M3.5 5.5V17.5Q3.5 19.8 5.8 19.8H16.5" fill="none" stroke="#2a9aa6" stroke-width="1.9"/>
<rect x="5.8" y="1" width="14.5" height="14.8" rx="2.3" fill="#f4fbfc" stroke="#1f7f8a" stroke-width="2"/>
</g>
<g transform="translate(536,163.9)">
<path d="M3.5 5.5V17.5Q3.5 19.8 5.8 19.8H16.5" fill="none" stroke="#2a9aa6" stroke-width="1.9"/>
<rect x="5.8" y="1" width="14.5" height="14.8" rx="2.3" fill="#f4fbfc" stroke="#1f7f8a" stroke-width="2"/>
<text x="13" y="13" font-family="Liberation Sans" font-weight="bold" font-size="10.5" fill="#e86a2a" text-anchor="middle">?</text></g>
<g transform="translate(536,203)">
<path d="M0.5 5.5L7 8L12.5 16.5L9 18.5L3.5 20.5Z" fill="#1a93b8"/>
<path d="M6.6 1.5L20.5 4.7L15.4 8.9L18.3 11.8L15.4 14.4L12.1 11.2L8.6 12.2Z" fill="#f4fad0" stroke="#3d5a1c" stroke-width="1.7" stroke-linejoin="round"/>
<path d="M8 10.5L12 13.5L10 17" stroke="#c8d820" stroke-width="1.6" fill="none"/></g>
<g transform="translate(536,241)">
<path d="M6.5 3.5H4Q1.8 3.5 1.8 5.8V17.5Q1.8 20 4 20H6" fill="none" stroke="#2a9aa6" stroke-width="1.9"/>
<rect x="6" y="5.5" width="14.5" height="15.3" rx="2.5" fill="#f4fbfc" stroke="#1f7f8a" stroke-width="2"/>
<path d="M9.5 1.3H17" stroke="#1c3f70" stroke-width="2.2"/>
<path d="M9.8 12H17M9.8 15.8H17" stroke="#1f7f8a" stroke-width="1.8"/></g>
<g transform="translate(536,282.5)">
<path d="M1.5 1.5L8.5 10.5M8.5 1.5L1.5 10.5" stroke="#2a7a3a" stroke-width="2.2"/>
<circle cx="15.7" cy="6" r="5.6" fill="#1a6aa0"/><path d="M15.7 2.5V8.5M13 6.2L15.7 9L18.4 6.2" fill="none" stroke="#fff" stroke-width="1.6"/>
<rect x="0.5" y="14.5" width="5" height="5" fill="#3a8a3e"/><rect x="7.8" y="14.5" width="5" height="5" fill="#3a8a3e"/><rect x="15" y="14.5" width="5" height="5" fill="#3a8a3e"/></g>
<g transform="translate(536,321.5)">
<path d="M1.5 1.5L8.5 10.5M8.5 1.5L1.5 10.5" stroke="#2a7a3a" stroke-width="2.2"/>
<circle cx="15.7" cy="6" r="3.4" fill="none" stroke="#f5a020" stroke-width="2.6"/><path d="M15.7 0.3V2M15.7 10V11.7M10 6H11.7M19.7 6H21.4M11.8 2.1L13 3.3M18.4 8.7L19.6 9.9M11.8 9.9L13 8.7M18.4 3.3L19.6 2.1" stroke="#f5a020" stroke-width="2"/>
<rect x="0.5" y="14.5" width="5" height="5" fill="#3a8a3e"/><rect x="7.8" y="14.5" width="5" height="5" fill="#3a8a3e"/><rect x="15" y="14.5" width="5" height="5" fill="#3a8a3e"/></g>
<g transform="translate(535.5,361)">
<path d="M1 2H9M1 5.8H9M1 9.6H9" stroke="#8aa030" stroke-width="2"/>
<circle cx="16.5" cy="6" r="5.6" fill="#1a6aa0"/><path d="M16.5 2.5V8.5M13.8 6.2L16.5 9L19.2 6.2" fill="none" stroke="#fff" stroke-width="1.6"/>
<text x="11.5" y="21" font-family="Liberation Sans" font-weight="bold" font-size="9.5" fill="#1f6f9a" text-anchor="middle" letter-spacing="0.3">CSV</text></g>
<g transform="translate(536,400)">
<rect x="0.5" y="0.3" width="20.5" height="5" fill="#1c6f8a"/>
<path d="M1.4 5V20.5H9M1.4 10H9M1.4 15H9M6 5V20.5" fill="none" stroke="#1c6f8a" stroke-width="1.8"/>
<path d="M20 9V14.5Q20 16.5 18 16.5H11.5M13.8 14L11.3 16.5L13.8 19M17.7 11.3L20 9L22.3 11.3" fill="none" stroke="#5a3a9a" stroke-width="1.9"/></g>
<g transform="translate(536,438.5)">
<path d="M1 0V21H22" fill="none" stroke="#1c6f8a" stroke-width="1.8"/>
<rect x="4" y="10.5" width="4" height="9.5" fill="#1a8ab0"/>
<rect x="9.8" y="6.5" width="4" height="13.5" fill="#f0781a"/>
<rect x="15.6" y="1.8" width="4" height="18.2" fill="#1a6aa0"/></g><path d="M1030.5 85.5V107M1020 96.5H1041" stroke="#1a6a3a" stroke-width="2.3"/>
<g transform="translate(1129,86)">
<rect x="1" y="1" width="19.6" height="19.2" rx="3" fill="none" stroke="#7c7c7c" stroke-width="1.8"/>
<path d="M4.4 1.5H16V4.5Q16 6.7 13.8 6.7H6.6Q4.4 6.7 4.4 4.5Z" fill="#8a8a8a"/>
<rect x="12" y="2" width="1.8" height="3.5" fill="#e0e0e0"/>
<path d="M13.3 10V14" stroke="#8a8a8a" stroke-width="1.6"/>
<path d="M10.3 12.8H16.3L13.3 16.6Z" fill="#8a8a8a"/></g>
<g transform="translate(1253,86)">
<path d="M2 4.5V3.5Q2 1 4.5 1H17.5Q20 1 20 3.5V17.5Q20 20 17.5 20H4.5Q2 20 2 17.5V16.5" fill="none" stroke="#5a3d98" stroke-width="1.9"/>
<path d="M2.5 8V13.5M5.7 8V13.5" stroke="#7e62b8" stroke-width="1.5"/>
<path d="M9 5.8L16.5 10.8L9 15.8Z" fill="#7f58c0"/></g>
<g transform="translate(1392,85)">
<path d="M11 1.6H4Q0.9 1.6 0.9 4.7V17.3Q0.9 20.4 4 20.4H16.8Q19.9 20.4 19.9 17.3V9" fill="none" stroke="#238c9a" stroke-width="1.9"/>
<path d="M8.2 13.6L18.2 2.2L21 4.6L11 16Z" fill="#efc8f4" stroke="#6a3aa8" stroke-width="1.4" stroke-linejoin="round"/>
<path d="M8.2 13.6L6.6 15L7.5 17.2L11 16" fill="#fff" stroke="none"/>
<circle cx="6.8" cy="15.3" r="1.1" fill="#333"/></g>
<g transform="translate(1620,84)">
<path d="M6.3 5.7Q14 -1.5 21.7 5.7Q14 12.9 6.3 5.7Z" fill="none" stroke="#7a7a7a" stroke-width="1.6"/>
<circle cx="13.9" cy="5.7" r="2.6" fill="#7a7a7a"/><circle cx="13.9" cy="5.7" r="0.9" fill="#eee"/>
<rect x="1" y="15.7" width="6.9" height="6.7" rx="1.4" fill="#7c7c7c"/>
<rect x="10.2" y="15.7" width="6.9" height="6.7" rx="1.4" fill="#7c7c7c"/>
<rect x="2" y="12.6" width="5" height="1.6" fill="#8a8a8a"/><rect x="11.2" y="12.6" width="5" height="1.6" fill="#8a8a8a"/></g></svg>
</div></body></html>
